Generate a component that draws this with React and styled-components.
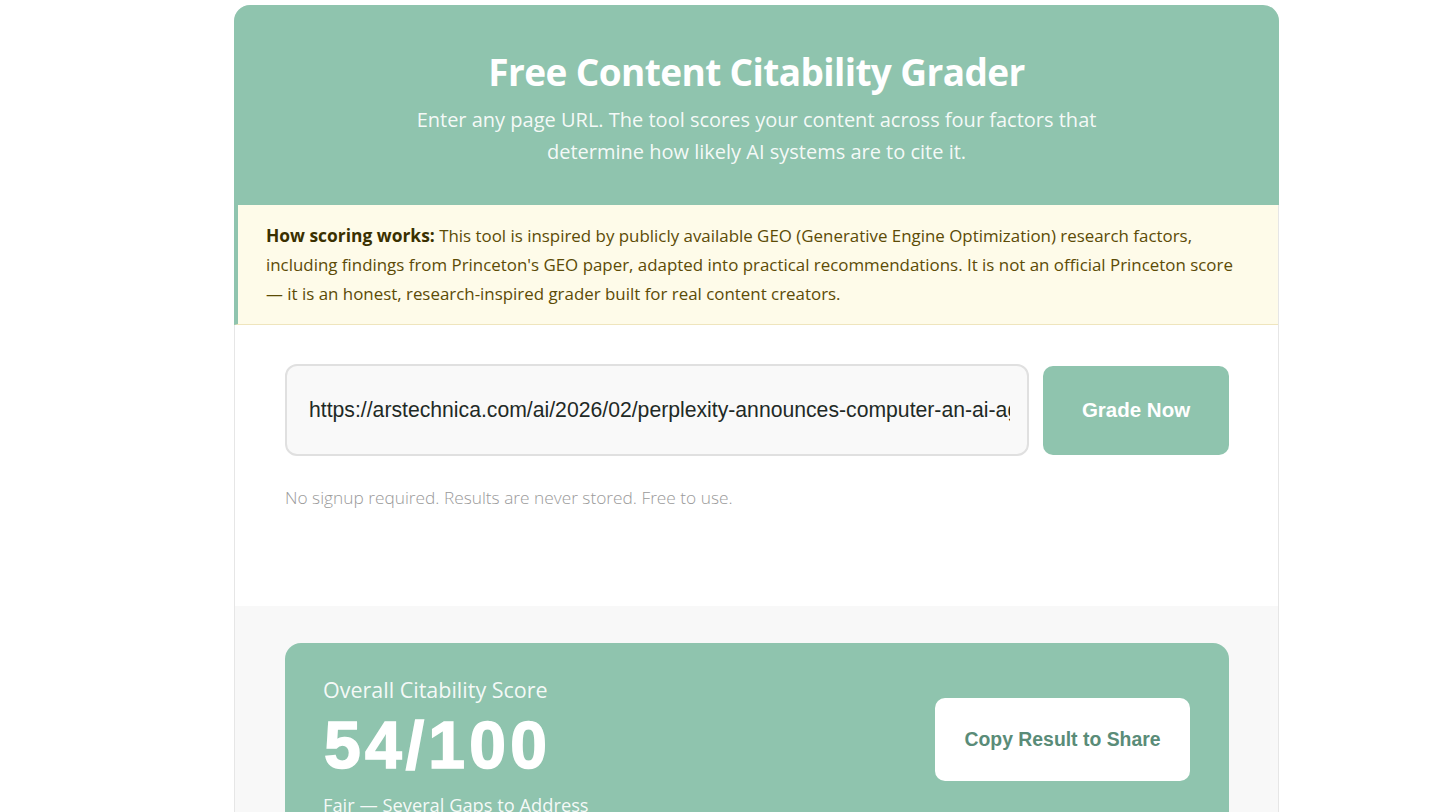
import React from "react";
import styled, { createGlobalStyle } from "styled-components";

const Global = createGlobalStyle`
  html, body { margin: 0; padding: 0; background: #ffffff; }
  body { font-family: "Open Sans", "Noto Sans", sans-serif; }
  * { box-sizing: border-box; }
`;

const Page = styled.div`
  padding: 5px 0 0 234px;
  height: 812px;
  overflow: hidden;
`;

const Card = styled.div`
  width: 1045px;
  border: 1px solid #e6e6e6;
  border-radius: 16px 16px 0 0;
  background: #ffffff;
`;

const Header = styled.header`
  background: #8fc4ae;
  border-radius: 16px 16px 0 0;
  margin: -1px -1px 0 -1px;
  height: 200px;
  padding: 45px 40px 0;
  text-align: center;
  color: #ffffff;
`;

const Title = styled.h1`
  margin: 0 0 10px;
  font-size: 37px;
  font-weight: 700;
  line-height: 44px;
  letter-spacing: -0.6px;
`;

const Subtitle = styled.p`
  margin: 0 auto;
  max-width: 720px;
  font-size: 20px;
  line-height: 32px;
  color: rgba(255, 255, 255, 0.92);
`;

const Info = styled.div`
  background: #fefbe9;
  border-left: 4px solid #8fc4ae;
  border-bottom: 1px solid #efe5bd;
  margin-left: -1px;
  padding: 16px 28px 16px 28px;
  font-size: 16.9px;
  line-height: 29px;
  color: #5c4b06;
  white-space: nowrap;
`;

const Strong = styled.strong`
  font-weight: 700;
  font-size: 17.4px;
  color: #3a3000;
`;

const FormSection = styled.section`
  padding: 39px 49px 0 50px;
  height: 281px;
`;

const Row = styled.div`
  display: flex;
  align-items: center;
  gap: 14px;
`;

const UrlInput = styled.input`
  flex: 1;
  height: 92px;
  border: 2px solid #e0e0e0;
  border-radius: 12px;
  background: #f9f9f9;
  padding: 0 17px 0 22px;
  font-family: "Liberation Sans", Arial, sans-serif;
  font-size: 21.2px;
  color: #1f2a26;
  outline: none;
`;

const PrimaryButton = styled.button`
  width: 186px;
  height: 89px;
  border: none;
  border-radius: 10px;
  background: #8fc4ae;
  color: #ffffff;
  font-family: "Liberation Sans", Arial, sans-serif;
  font-size: 20.5px;
  font-weight: 700;
  cursor: pointer;
`;

const Note = styled.p`
  margin: 30px 0 0;
  font-size: 17.3px;
  font-weight: 300;
  color: #9a9a9a;
`;

const ResultsSection = styled.section`
  background: #f8f8f8;
  padding: 37px 49px 0 50px;
  height: 220px;
`;

const ScoreCard = styled.div`
  background: #8fc4ae;
  border-radius: 16px;
  padding: 33px 39px 40px 38px;
  display: flex;
  align-items: flex-start;
  justify-content: space-between;
  color: #ffffff;
`;

const ScoreText = styled.div`
  display: flex;
  flex-direction: column;
`;

const ScoreLabel = styled.div`
  font-size: 21.5px;
  line-height: 28px;
  color: rgba(255, 255, 255, 0.92);
`;

const ScoreValue = styled.div`
  font-family: "Liberation Sans", Arial, sans-serif;
  font-size: 66px;
  font-weight: 700;
  line-height: 82px;
  letter-spacing: 4.2px;
  -webkit-text-stroke: 1.6px #ffffff;
  padding-left: 1px;
`;

const ScoreVerdict = styled.div`
  margin-top: 6px;
  font-size: 18.3px;
  line-height: 26px;
  color: rgba(255, 255, 255, 0.92);
`;

const ShareButton = styled.button`
  width: 255px;
  height: 83px;
  margin-top: 22px;
  border: none;
  border-radius: 10px;
  background: #ffffff;
  color: #5a8c78;
  font-family: "Liberation Sans", Arial, sans-serif;
  font-size: 19.4px;
  font-weight: 700;
  cursor: pointer;
`;

export default function App() {
  return (
    <>
      <Global />
      <Page>
        <Card>
          <Header>
            <Title>Free Content Citability Grader</Title>
            <Subtitle>
              Enter any page URL. The tool scores your content across four factors that
              <br />
              determine how likely AI systems are to cite it.
            </Subtitle>
          </Header>
          <Info>
            <Strong>How scoring works:</Strong> This tool is inspired by publicly available GEO (Generative Engine Optimization) research factors,
            <br />
            including findings from Princeton's GEO paper, adapted into practical recommendations. It is not an official Princeton score
            <br />— it is an honest, research-inspired grader built for real content creators.
          </Info>
          <FormSection>
            <Row>
              <UrlInput
                type="text"
                defaultValue="https://arstechnica.com/ai/2026/02/perplexity-announces-computer-an-ai-agent-that-can-use-your-browser/"
              />
              <PrimaryButton>Grade Now</PrimaryButton>
            </Row>
            <Note>No signup required. Results are never stored. Free to use.</Note>
          </FormSection>
          <ResultsSection>
            <ScoreCard>
              <ScoreText>
                <ScoreLabel>Overall Citability Score</ScoreLabel>
                <ScoreValue>54/100</ScoreValue>
                <ScoreVerdict>Fair — Several Gaps to Address</ScoreVerdict>
              </ScoreText>
              <ShareButton>Copy Result to Share</ShareButton>
            </ScoreCard>
          </ResultsSection>
        </Card>
      </Page>
    </>
  );
}
